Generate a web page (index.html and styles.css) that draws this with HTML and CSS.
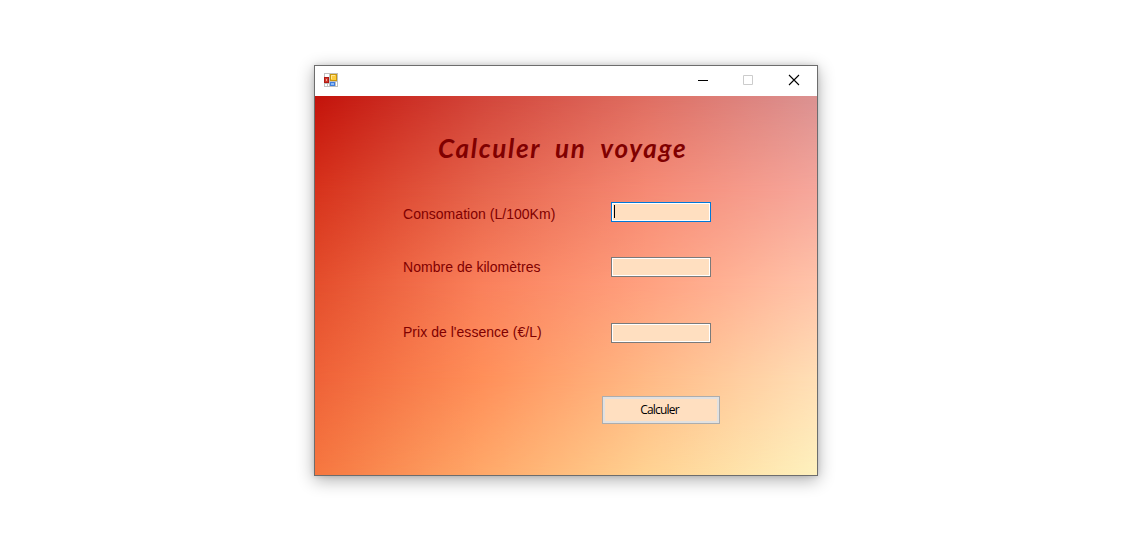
FILE: index.html
```
<!DOCTYPE html>
<html lang="fr">
<head>
<meta charset="utf-8">
<title>Calculer un voyage</title>
<link rel="stylesheet" href="styles.css">
</head>
<body>
<main class="window">
  <header class="titlebar">
    <svg class="app-icon" width="14" height="14" viewBox="0 0 14 14" shape-rendering="crispEdges">
      <rect width="14" height="14" fill="#c0c0c0"/>
      <path fill="#fff" d="M1 1h4v3H1zM1 11h2v2H1zM4 11h1v2H4zM12 9h1v4h-1z"/>
      <rect y="4" width="5" height="6" fill="#b01a14"/><rect x="1" y="5" width="3" height="4" fill="#d23a2c"/><rect x="2" y="6" width="1" height="2" fill="#f5a79b"/>
      <rect x="6" y="1" width="7" height="7" fill="#c8960f"/><rect x="7" y="2" width="5" height="5" fill="#fccb3c"/><path fill="#ffe591" d="M7 2h4v1H8v3H7z"/>
      <rect x="6" y="9" width="5" height="4" fill="#3f7ddc"/><rect x="7" y="10" width="3" height="2" fill="#8dbaf5"/>
    </svg>
    <div class="controls">
      <svg width="10" height="10" viewBox="0 0 10 10"><path d="M0 5.5h10" stroke="#000"/></svg>
      <svg width="10" height="10" viewBox="0 0 10 10"><path d="M.5.5h9v9h-9z" fill="none" stroke="#ccc"/></svg>
      <svg width="10" height="10" viewBox="0 0 10 10"><path d="M0 0l10 10M10 0L0 10" stroke="#000" stroke-width="1.1"/></svg>
    </div>
  </header>
  <section class="client">
    <div class="wash wash-1"></div>
    <div class="wash wash-2"></div>
    <div class="wash wash-3"></div>
    <div class="wash wash-4"></div>
    <div class="content">
      <h1 class="title">Calculer un voyage</h1>
      <form class="form">
        <label class="label">Consomation (L/100Km)</label>
        <div class="field field-active"><span class="caret"></span></div>
        <label class="label">Nombre de kilomètres</label>
        <div class="field"></div>
        <label class="label">Prix de l'essence (€/L)</label>
        <div class="field"></div>
        <button class="submit" type="button">Calculer</button>
      </form>
    </div>
  </section>
</main>
</body>
</html>
```
FILE: styles.css
```
* { box-sizing: border-box; }
body { margin: 0; height: 543px; padding: 65px 0 0 314px; background: #fff; overflow: hidden; font-family: "Liberation Sans", Arial, sans-serif; }
.window { width: 504px; height: 411px; border: 1px solid #6d6d6d; background: #fff; box-shadow: 0 4px 16px rgba(0,0,0,.32), 0 0 5px rgba(0,0,0,.12); }
.titlebar { height: 30px; display: flex; align-items: center; justify-content: space-between; padding: 0 18px 0 9px; background: #fff; }
.app-icon { display: block; margin-top: -2px; }
.controls { display: flex; margin-top: -2px; }
.controls svg { display: block; overflow: visible; }
.controls svg:nth-child(2) { margin: 0 36px 0 35px; }
.client { position: relative; height: 379px; background: linear-gradient(90deg, #c4130b, #d2453a 33%, #df6e62 66%, #db9292); }
/* Each wash fades in from the row above, blending the background in two directions. */
.wash { position: absolute; inset: 0; }
.wash-1 { background: linear-gradient(90deg, #d7331c, #e6644c 33%, #f68a74 66%, #f6a79c); -webkit-mask: linear-gradient(transparent 0, #000 25%); mask: linear-gradient(transparent 0, #000 25%); }
.wash-2 { background: linear-gradient(90deg, #e44e2c, #fa805b 33%, #ffa180 66%, #ffc4aa); -webkit-mask: linear-gradient(transparent 25%, #000 50%); mask: linear-gradient(transparent 25%, #000 50%); }
.wash-3 { background: linear-gradient(90deg, #ef6238, #ff8f59 33%, #ffba86 66%, #ffdfb6); -webkit-mask: linear-gradient(transparent 50%, #000 75%); mask: linear-gradient(transparent 50%, #000 75%); }
.wash-4 { background: linear-gradient(90deg, #f67740, #ffa869 33%, #ffd292 66%, #fef1be); -webkit-mask: linear-gradient(transparent 75%, #000); mask: linear-gradient(transparent 75%, #000); }
.content { position: relative; height: 100%; padding-top: 34px; }
.title { margin: 0 0 0 123px; height: 36px; font: italic 700 26px/36px "Comic Sans MS", Lato, sans-serif; letter-spacing: 1.7px; word-spacing: 7px; color: #800000; white-space: nowrap; }
.form { display: grid; grid-template-columns: 208px 118px; grid-template-rows: 55px 66px 73px 28px; margin: 36px 0 0 88px; align-items: start; }
.label { font-size: 14px; line-height: 18px; letter-spacing: .03px; padding-top: 3px; color: #800000; white-space: nowrap; }
.label:nth-of-type(2) { padding-top: 1px; }
.label:nth-of-type(3) { padding-top: 0; }
.field { width: 100px; height: 20px; border: 1px solid #7a7a7a; background: #ffdfc0; box-shadow: inset 0 0 0 1px #fff; padding: 2px; }
.field-active { border-color: #0078d7; }
.caret { display: block; width: 1px; height: 13px; background: #000; }
.submit { grid-column: 2; width: 118px; height: 28px; margin: 0 0 0 -9px; padding: 0 3px 0 0; border: 1px solid #adadad; box-shadow: inset 0 0 0 2px #e1e1e1; background: #ffdfc0; font: 12px/20px "Open Sans", "Noto Sans", sans-serif; letter-spacing: -.8px; color: #000; }
```
